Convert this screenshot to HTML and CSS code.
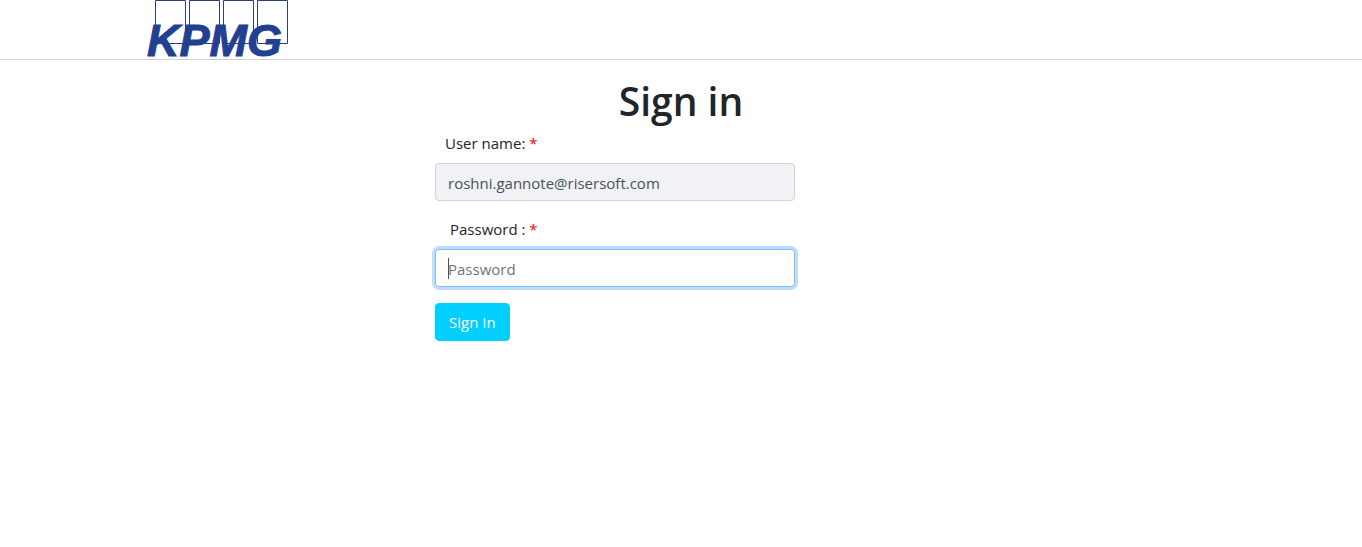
FILE: index.html
```html
<!DOCTYPE html>
<html lang="en">
<head>
<meta charset="utf-8">
<title>Sign in</title>
<link rel="stylesheet" href="styles.css">
</head>
<body>
<header class="site-header">
  <a class="brand" href="#" aria-label="KPMG">
    <svg class="logo" width="142" height="59" viewBox="0 0 142 59">
      <g class="logo-boxes">
        <path d="M8.500 .5h30v43h-30zM42.500 .5h30v43h-30zM76.500 .5h30v43h-30zM110.500 .5h30v43h-30z"/>
      </g>
      <text class="logo-text" x="0" y="56">KPMG</text>
    </svg>
  </a>
</header>
<main class="login">
  <h1 class="title">Sign in</h1>
  <form class="form">
    <label class="label" for="user">User name: <span class="required">*</span></label>
    <input class="field" id="user" type="text" value="roshni.gannote@risersoft.com" readonly>
    <label class="label label-password" for="password">Password : <span class="required">*</span></label>
    <div class="field-wrap">
      <input class="field field-active" id="password" type="password" placeholder="Password">
      <span class="caret"></span>
    </div>
    <button class="submit" type="submit">Sign In</button>
  </form>
</main>
</body>
</html>
```
FILE: styles.css
```css
* { box-sizing: border-box; }
body {
  margin: 0;
  background: #fff;
  color: #212529;
  font-family: "Segoe UI", "Open Sans", sans-serif;
  font-size: 15px;
  line-height: 24px;
}
.site-header {
  display: flex;
  padding: 0 147px;
  border-bottom: 1px solid #c8d4dc;
}
.brand { display: block; height: 59px; }
.logo { display: block; overflow: visible; }
.logo-boxes { fill: #fff; stroke: #2b3f80; stroke-width: 1; }
.logo-text {
  font: italic bold 45px "Liberation Sans", Arial, sans-serif;
  fill: #22408f;
  stroke: #22408f;
  stroke-width: 1;
}
.login {
  width: 100%;
  max-width: 492px;
  margin: 0 auto;
  padding-top: 17px;
}
.title {
  margin: 0 0 6px;
  font-size: 39px;
  font-weight: 600;
  line-height: 48px;
  text-align: center;
}
.form {
  display: flex;
  flex-direction: column;
  align-items: flex-start;
  max-width: 360px;
}
.label { padding-left: 10px; margin-bottom: 8px; }
.label-password { padding-left: 15px; }
.required { color: #f00; }
.field {
  display: block;
  width: 100%;
  height: 38px;
  margin-bottom: 16px;
  padding: 7px 12px 5px;
  border: 1px solid #ced4da;
  border-radius: 4px;
  background: #f0f2f5;
  color: #495057;
  font: inherit;
}
.field-wrap { position: relative; width: 100%; }
.field-active {
  background: #fff;
  border-color: #80bdff;
  outline: 0;
  box-shadow: 0 0 0 3px #bfdeff;
}
.field::placeholder { color: #6c757d; opacity: 1; }
.caret {
  position: absolute;
  top: 9px;
  left: 13px;
  width: 1px;
  height: 21px;
  background: #495057;
}
.submit {
  padding: 6px 13px;
  border: 1px solid #00cfff;
  border-radius: 4px;
  background: #00cfff;
  color: #fff;
  font: inherit;
}
```
